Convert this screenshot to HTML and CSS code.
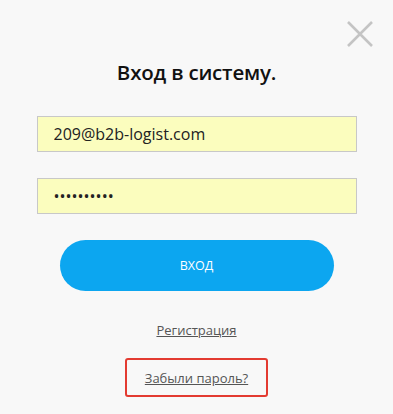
FILE: index.html
```html
<!DOCTYPE html>
<html>
<head>
  <link rel="stylesheet" href="styles.css">
</head>
<body>
  <div class="login-box">
    <!-- close -->
    <div class="close-btn">
      <svg width="26" height="26" viewBox="0 0 26 26"><path d="M1 1L25 25M25 1L1 25" stroke="#c4c4c4" stroke-width="2.6"/></svg>
    </div>

    <h1 class="login-title">Вход в систему.</h1>

    <div class="login-form">
      <input class="field" type="text" value="209@b2b-logist.com">
      <input class="field" type="password" value="1234567890">
      <button class="enter-button">ВХОД</button>
    </div>

    <a class="link" href="#">Регистрация</a>
    <div class="forgot-box">
      <a class="link" href="#">Забыли пароль?</a>
    </div>
  </div>
</body>
</html>
```
FILE: styles.css
```css
body {
  margin: 0;
  background: #f8f8f8;
  font-family: 'Open Sans', 'Noto Sans', sans-serif;
  color: #111;
}

.login-box {
  position: relative;
  height: 414px;
  display: flex;
  flex-direction: column;
  align-items: center;
}

.close-btn {
  position: absolute;
  top: 21px;
  right: 20px;
  width: 26px;
  height: 26px;
}

.login-title {
  margin: 58px 0 0;
  font-size: 20.5px;
  font-weight: 600;
  letter-spacing: -0.2px;
  line-height: 28px;
}

.login-form {
  margin-top: 30px;
  width: 320px;
  display: flex;
  flex-direction: column;
  align-items: center;
}

.field {
  box-sizing: border-box;
  width: 320px;
  height: 36px;
  margin-bottom: 26px;
  padding: 0 16px;
  background: #fbfdbe;
  border: 1px solid #c8c8c8;
  font-family: inherit;
  font-size: 16px;
  color: #222;
  outline: none;
}

.enter-button {
  margin-top: 0;
  width: 274px;
  height: 51px;
  border: none;
  border-radius: 26px;
  background: #0ca6f0;
  color: #fff;
  font-family: inherit;
  font-size: 12.5px;
  font-weight: 500;
}

.link {
  color: #555;
  font-size: 13px;
  text-decoration: underline;
}

.login-box > .link {
  margin-top: 30px;
}

.forgot-box {
  margin-top: 19px;
  width: 139px;
  height: 35px;
  border: 2px solid #e33b31;
  border-radius: 3px;
  display: flex;
  align-items: center;
  justify-content: center;
}
```
